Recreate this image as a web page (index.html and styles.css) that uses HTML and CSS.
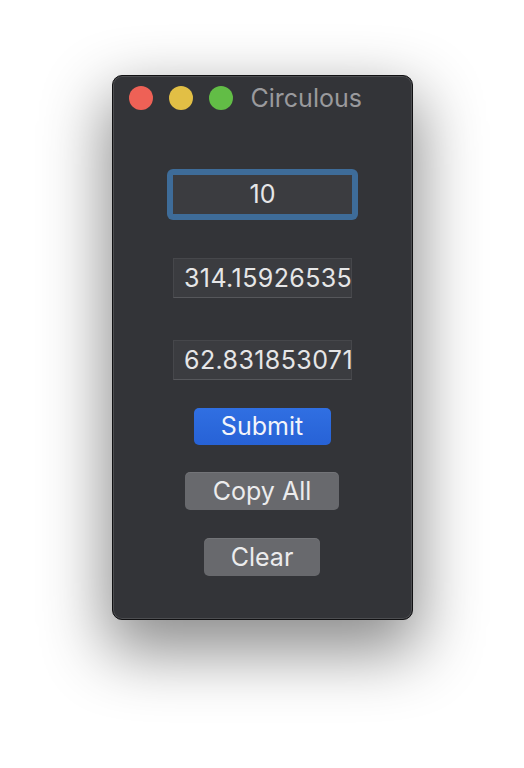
FILE: index.html
```html
<!DOCTYPE html>
<html>
<head>
<meta charset="utf-8">
<link rel="stylesheet" href="styles.css">
</head>
<body>
<div class="stage">
  <div class="window">
    <div class="titlebar">
      <span class="light red"></span>
      <span class="light yellow"></span>
      <span class="light green"></span>
      <span class="title">Circulous</span>
    </div>
    <div class="content">
      <div class="focus-ring">
        <div class="field centered">10</div>
      </div>
      <div class="field f2">314.15926535</div>
      <div class="field f3">62.831853071</div>
      <div class="btn primary">Submit</div>
      <div class="btn gray copy">Copy All</div>
      <div class="btn gray clear">Clear</div>
    </div>
  </div>
</div>
</body>
</html>
```
FILE: styles.css
```css
html, body {
  margin: 0;
  padding: 0;
  background: #ffffff;
}
body {
  width: 524px;
  height: 768px;
  overflow: hidden;
  font-family: "Inter", "Liberation Sans", sans-serif;
}
.stage {
  display: flex;
  justify-content: center;
  padding-top: 75px;
}
.window {
  box-sizing: border-box;
  width: 301px;
  height: 545px;
  background: #333438;
  border: 1px solid #111113;
  border-radius: 10px;
  box-shadow: inset 0 0 0 1px rgba(255,255,255,0.13), 0 26px 64px 6px rgba(0,0,0,0.45);
}
.titlebar {
  height: 44px;
  display: flex;
  align-items: center;
  padding-left: 16px;
}
.light {
  width: 24px;
  height: 24px;
  border-radius: 50%;
  margin-right: 16px;
}
.red { background: #ee6156; }
.yellow { background: #e2bf45; }
.green { background: #62bd46; }
.title {
  margin-left: 2px;
  color: #9a9a9d;
  font-size: 25px;
}
.content {
  display: flex;
  flex-direction: column;
  align-items: center;
  padding-top: 49px;
}
.focus-ring {
  padding: 6px;
  border-radius: 6px;
  background: #3e6c99;
  margin-left: 1px;
}
.field {
  box-sizing: border-box;
  width: 179px;
  height: 40px;
  background: #3b3c40;
  border: 1px solid #46474b;
  border-bottom-color: #56575b;
  color: #e6e6e7;
  font-size: 25px;
  letter-spacing: 0.4px;
  line-height: 38px;
  padding: 0 2px 0 10px;
  white-space: nowrap;
  overflow: hidden;
  margin-left: 1px;
}
.field.centered {
  text-align: center;
  padding: 0;
  margin-left: 0;
  height: 39px;
  line-height: 37px;
  border-color: #3b3c40;
  letter-spacing: 0;
}
.f2 { margin-top: 38px; }
.f3 { margin-top: 42px; }
.btn {
  box-sizing: border-box;
  height: 37px;
  border-radius: 5px;
  color: #ececed;
  font-size: 25px;
  line-height: 37px;
  text-align: center;
}
.primary {
  width: 137px;
  margin-top: 28px;
  background: linear-gradient(#306fe2, #2762d6);
  color: #f2f4fa;
}
.gray {
  height: 38px;
  line-height: 38px;
  background: #68696d;
  box-shadow: inset 0 1px 0 rgba(255,255,255,0.08);
}
.copy {
  width: 154px;
  margin-top: 27px;
}
.clear {
  width: 116px;
  margin-top: 28px;
}
```
